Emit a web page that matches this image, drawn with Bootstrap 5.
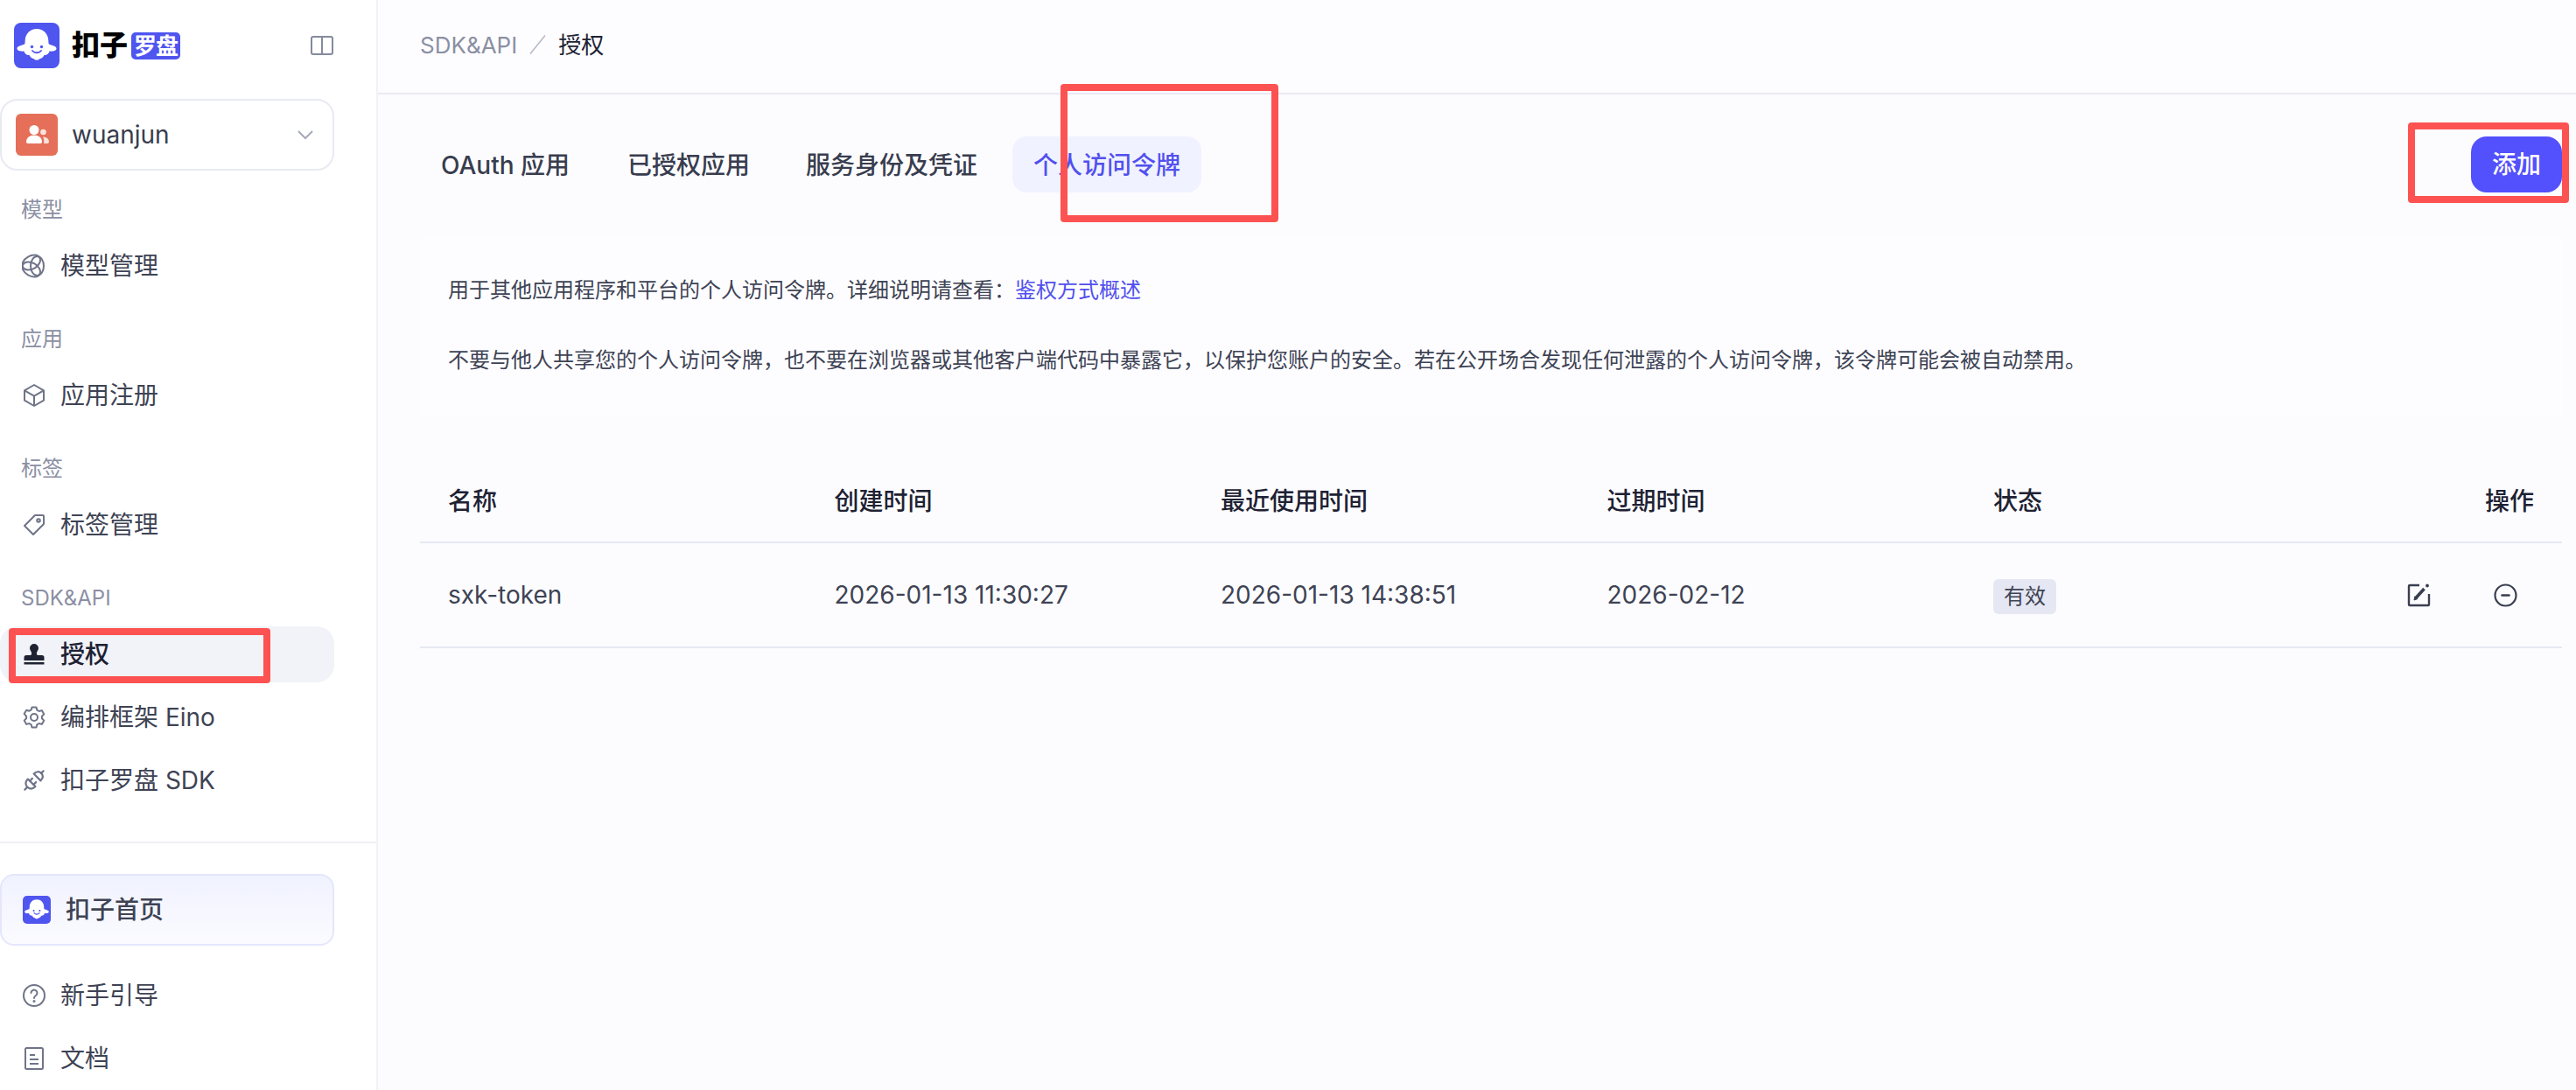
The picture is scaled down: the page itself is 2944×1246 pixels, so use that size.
<!doctype html>
<html lang="zh-CN">
<head>
<meta charset="utf-8">
<title>授权</title>
<link href="https://cdn.jsdelivr.net/npm/bootstrap@5.3.0/dist/css/bootstrap.min.css" rel="stylesheet">
<style>
html,body{height:100%}
body{font-family:Inter,"Noto Sans CJK SC",sans-serif;background:#fcfcff;color:#383d4e;overflow:hidden;position:relative}
.shell{height:1246px}
.side{width:432px;flex:none;background:#fff;border-right:2px solid #f1f2f7}
.brand{height:104px;padding-left:16px;padding-right:49px}
.logo-mark{width:52px;height:52px;flex:none}
.logo-text{font-size:32px;font-weight:900;color:#000;line-height:1;margin-left:14px;letter-spacing:0}
.logo-tag{font-size:26px;font-weight:700;color:#fff;background:#4f55ef;border-radius:5px;width:56px;height:31px;line-height:31px;text-align:center;margin-left:4px;letter-spacing:-1px;overflow:hidden}
.acct{width:382px;height:82px;margin:9px 0 0 0;border:2px solid #e8eaf2;border-radius:20px;padding:0 22px 0 16px;font-size:28px;color:#383d4e}
.acct-ava{width:48px;height:48px;border-radius:6px;background:#e56f58;flex:none;margin-right:16px}
.nav-area{padding-top:25px}
.grp+.grp{margin-top:32px}
.grp-label{height:40px;line-height:40px;padding-left:24px;font-size:24px;color:#8b8fa3;margin-bottom:12px}
.item{height:64px;width:382px;border-radius:20px;padding-left:25px;font-size:28px;color:#3e4354;text-decoration:none}
.item+.item{margin-top:8px}
.item svg{width:28px;height:28px;flex:none;margin-right:16px;color:#6f7488}
.item.on{background:#f1f3f8;color:#1e2233;font-weight:500}
.item.on svg{color:#1e2233}
.side-foot{border-top:2px solid #efeff4;padding:35px 0 4px;margin-top:auto}
.home{width:382px;height:82px;margin:0 0 25px 0;border:2px solid #e4e7fc;border-radius:16px;background:linear-gradient(180deg,#f0f2ff,#fbfbff);padding-left:24px;font-size:28px;font-weight:500;color:#3e4354}
.home .logo-mark{width:32px;height:32px;margin-right:17px}
.top{height:108px;padding:0 0 4px 48px;border-bottom:2px solid #e9eaf3;font-size:26px;background:#fdfdff}
.crumb-a{color:#8b8fa3}
.crumb-s{margin:0 14px;flex:none}
.crumb-b{color:#1e2233}
.body-wrap{padding:48px 16px 0 48px}
.tabbar{height:64px}
.tab-btn{height:64px;padding:2px 24px 0;border-radius:16px;font-size:28px;font-weight:500;color:#383d4e;text-decoration:none}
.tab-first{padding-right:26px}
.tab-btn.on{background:#f0f2ff;color:#5150ee}
.add-btn{width:104px;height:64px;padding:0;border:0;border-radius:18px;background:#5350fd;color:#fff;font-size:28px;font-weight:500}
.add-btn:hover{background:#5350fd;color:#fff}
.info{margin-top:50px;height:204px;padding:42px 32px 0;font-size:24px;line-height:40px;color:#3e4354;background:#fdfdff}
.info p{margin:0 0 40px}
.info a{color:#5150ee;text-decoration:none}
.tbl-wrap{margin-top:52px}
table.tok{table-layout:fixed;width:100%;margin:0;--bs-table-bg:transparent;font-size:28px}
.tok th,.tok td{padding:0 32px;vertical-align:middle;border-bottom:2px solid #e6e8f3;color:#3e4354;white-space:nowrap;box-shadow:none}
.tok thead th{height:94px;font-weight:500;color:#1e2233}
.tok tbody td{height:120px}
.tok col.c{width:441.5px}
.pill-ok{display:inline-block;width:72px;height:40px;line-height:40px;text-align:center;border-radius:6px;background:#e5e7f3;font-size:24px;color:#3e4354}
.acts{gap:72px;margin-right:19px;color:#3a3f50}
.acts svg{width:27px;height:27px;overflow:visible}
.mk{position:absolute;border:8px solid #fd5252;border-radius:4px;pointer-events:none}
.mk-a{left:10px;top:718px;width:299px;height:63px}
.mk-b{left:1212px;top:96px;width:249px;height:158px}
.mk-c{left:2752px;top:140px;width:184px;height:92px}
</style>
</head>
<body>
<svg width="0" height="0" class="d-block position-absolute">
  <symbol id="ghost" viewBox="0 0 52 52">
    <rect width="52" height="52" rx="8" fill="#4f55ef"/>
    <path fill="#fff" d="M26 7c-7.700 0-13 5.700-13.300 13l-.2 3.500c-.2 1-1.500 1.500-3 2C6.500 26.300 3.500 27.300 3.500 29.500c0 2.500 4 3.500 8 3 .8 3 3 4.800 6 4.500 1.300 2.800 3 4 5 4 1.200 2.300 5.800 2.300 7 0 2 0 3.700-1.200 5-4 3 .3 5.200-1.500 6-4.500 4 .5 8-.5 8-3 0-2.200-3-3.200-6-4-1.500-.5-2.800-1-3-2l-.2-3.500C39 12.700 33.700 7 26 7z"/>
    <circle cx="20.500" cy="27.500" r="1.700" fill="#4f55ef"/><circle cx="31.500" cy="27.500" r="1.700" fill="#4f55ef"/>
    <path d="M21 32c2.500 3 7.500 3 10 0" fill="none" stroke="#4f55ef" stroke-width="1.800" stroke-linecap="round"/>
  </symbol>
</svg>

<div class="shell d-flex">
  <aside class="side d-flex flex-column">
    <div class="brand d-flex align-items-center">
      <svg class="logo-mark"><use href="#ghost"/></svg>
      <span class="logo-text">扣子</span>
      <span class="logo-tag">罗盘</span>
      <svg class="ms-auto" width="26" height="22" viewBox="0 0 26 22" fill="none" stroke="#858a9e" stroke-width="2"><rect x="1" y="1" width="24" height="20" rx="2"/><path d="M13 1v20"/></svg>
    </div>
    <div class="acct d-flex align-items-center">
      <span class="acct-ava d-flex">
        <svg width="48" height="48" viewBox="0 0 48 48" fill="#fff"><circle cx="21" cy="18.500" r="5.500"/><path d="M12 32c0-4.500 4-7.500 9-7.500s9 3 9 7.500c0 1.300-.7 2-2 2H14c-1.300 0-2-.7-2-2z"/><g opacity=".8"><circle cx="31.500" cy="21" r="3.300"/><path d="M31 26.500c4 0 7 2.200 7 5.500 0 1.300-.7 2-2 2h-4c.7-2.800.3-5.500-1-7.500z"/></g></svg>
      </span>
      <span>wuanjun</span>
      <svg class="ms-auto" width="18" height="11" viewBox="0 0 18 11" fill="none" stroke="#a6aaba" stroke-width="2"><path d="M1 1l8 8 8-8"/></svg>
    </div>
    <nav class="nav-area">
      <div class="grp">
        <div class="grp-label">模型</div>
        <a class="item d-flex align-items-center" href="#"><svg viewBox="0 0 28 28" fill="none" stroke="currentColor" stroke-width="2"><ellipse cx="17.500" cy="14" rx="7.500" ry="11"/><ellipse cx="17.500" cy="14" rx="7.500" ry="11" transform="rotate(120 13 14)"/><ellipse cx="17.500" cy="14" rx="7.500" ry="11" transform="rotate(240 13 14)"/></svg>模型管理</a>
      </div>
      <div class="grp">
        <div class="grp-label">应用</div>
        <a class="item d-flex align-items-center" href="#"><svg viewBox="0 0 28 28" fill="none" stroke="currentColor" stroke-width="2" stroke-linejoin="round"><path d="M14 2l11 6.300v11.400L14 26 3 19.700V8.300z"/><path d="M3 8.300l11 6.400 11-6.400M14 14.700V26"/></svg>应用注册</a>
      </div>
      <div class="grp">
        <div class="grp-label">标签</div>
        <a class="item d-flex align-items-center" href="#"><svg viewBox="0 0 28 28" fill="none" stroke="currentColor" stroke-width="2" stroke-linejoin="round"><path d="M15 3h9a1 1 0 0 1 1 1v9L13 25 3 15z"/><circle cx="19" cy="9" r="1.800"/></svg>标签管理</a>
      </div>
      <div class="grp">
        <div class="grp-label">SDK&amp;API</div>
        <a class="item on d-flex align-items-center" href="#"><svg viewBox="0 0 28 28" fill="currentColor"><path d="M14 2a5 5 0 0 0-5 5c0 2 1.500 3.200 2 5 .3 1.200 0 2.500-1 3H5a2.500 2.500 0 0 0-2.500 2.500V21h23v-3.500A2.500 2.500 0 0 0 23 15h-5c-1-.5-1.300-1.800-1-3 .5-1.800 2-3 2-5a5 5 0 0 0-5-5z"/><rect x="2.500" y="23" width="23" height="2.500"/></svg>授权</a>
        <a class="item d-flex align-items-center" href="#"><svg viewBox="0 0 28 28" fill="none" stroke="currentColor" stroke-width="2" stroke-linejoin="round"><path d="M11.500 2.500h5l.8 3.200 2.300 1.300 3.200-.9 2.500 4.300-2.400 2.300v2.600l2.400 2.300-2.500 4.300-3.200-.9-2.300 1.300-.8 3.200h-5l-.8-3.200-2.300-1.300-3.200.9-2.500-4.300 2.400-2.300v-2.600L2.700 10.100l2.500-4.300 3.200.9 2.300-1.300z"/><circle cx="14" cy="14" r="4"/></svg>编排框架 Eino</a>
        <a class="item d-flex align-items-center" href="#"><svg viewBox="0 0 28 28" fill="none" stroke="currentColor" stroke-width="2.200" stroke-linecap="round" stroke-linejoin="round"><g transform="rotate(45 14 14)"><path d="M8.500 9h11c0-4-2-6.500-5.500-6.500S8.500 5 8.500 9z"/><path d="M14 2.500V-1"/><path d="M8 18h12v1a6 6 0 0 1-12 0z"/><path d="M11 18v-4M17 18v-4M14 25v4"/></g></svg>扣子罗盘 SDK</a>
      </div>
    </nav>
    <div class="side-foot">
      <div class="home d-flex align-items-center"><svg class="logo-mark"><use href="#ghost"/></svg>扣子首页</div>
      <a class="item d-flex align-items-center" href="#"><svg viewBox="0 0 28 28" fill="none" stroke="currentColor" stroke-width="2"><circle cx="14" cy="14" r="12"/><path d="M10.500 11a3.500 3.500 0 1 1 5.400 3c-1.200.8-1.900 1.500-1.900 3" stroke-linecap="round"/><circle cx="14" cy="20.500" r=".6" fill="currentColor"/></svg>新手引导</a>
      <a class="item d-flex align-items-center" href="#"><svg viewBox="0 0 28 28" fill="none" stroke="currentColor" stroke-width="2"><rect x="4" y="2" width="20" height="24" rx="1.500"/><path d="M9 10h6M9 15h10M9 20h10"/></svg>文档</a>
    </div>
  </aside>

  <main class="flex-grow-1 min-w-0">
    <header class="top d-flex align-items-center">
      <span class="crumb-a">SDK&amp;API</span>
      <svg class="crumb-s" width="19" height="22" viewBox="0 0 19 22" fill="none" stroke="#b4b7c6" stroke-width="1.500"><path d="M1 21.500L18 .5"/></svg>
      <span class="crumb-b">授权</span>
    </header>
    <div class="body-wrap">
      <div class="tabbar d-flex align-items-center justify-content-between">
        <div class="d-flex gap-3">
          <a class="tab-btn tab-first d-flex align-items-center" href="#">OAuth 应用</a>
          <a class="tab-btn d-flex align-items-center" href="#">已授权应用</a>
          <a class="tab-btn d-flex align-items-center" href="#">服务身份及凭证</a>
          <a class="tab-btn on d-flex align-items-center" href="#">个人访问令牌</a>
        </div>
        <button class="btn add-btn" type="button">添加</button>
      </div>
      <section class="info">
        <p>用于其他应用程序和平台的个人访问令牌。详细说明请查看：<a href="#">鉴权方式概述</a></p>
        <p>不要与他人共享您的个人访问令牌，也不要在浏览器或其他客户端代码中暴露它，以保护您账户的安全。若在公开场合发现任何泄露的个人访问令牌，该令牌可能会被自动禁用。</p>
      </section>
      <div class="tbl-wrap">
        <table class="table tok">
          <colgroup><col class="c"><col class="c"><col class="c"><col class="c"><col class="c"><col></colgroup>
          <thead><tr><th>名称</th><th>创建时间</th><th>最近使用时间</th><th>过期时间</th><th>状态</th><th class="text-end">操作</th></tr></thead>
          <tbody><tr>
            <td>sxk-token</td><td>2026-01-13 11:30:27</td><td>2026-01-13 14:38:51</td><td>2026-02-12</td>
            <td><span class="pill-ok">有效</span></td>
            <td><div class="acts d-flex justify-content-end align-items-center">
              <svg viewBox="0 0 27 27" fill="none" stroke="currentColor" stroke-width="2.400" stroke-linejoin="round"><path d="M14 2H3a1 1 0 0 0-1 1v21a1 1 0 0 0 1 1h21a1 1 0 0 0 1-1V12"/><path d="M10 16.500L19.500 6" stroke-width="3.600"/><path d="M8 19l.8-4.200 3 2.800z" fill="currentColor" stroke-width="1"/><circle cx="23" cy="2.500" r="1.900" fill="currentColor" stroke="none"/></svg>
              <svg viewBox="0 0 27 27" fill="none" stroke="currentColor" stroke-width="2.200"><circle cx="13.500" cy="13.500" r="12"/><path d="M9.500 13.500h8" stroke-width="2.600" stroke-linecap="round"/></svg>
            </div></td>
          </tr></tbody>
        </table>
      </div>
    </div>
  </main>
</div>

<div class="mk mk-a"></div>
<div class="mk mk-b"></div>
<div class="mk mk-c"></div>

<script src="https://cdn.jsdelivr.net/npm/bootstrap@5.3.0/dist/js/bootstrap.bundle.min.js"></script>
</body>
</html>
